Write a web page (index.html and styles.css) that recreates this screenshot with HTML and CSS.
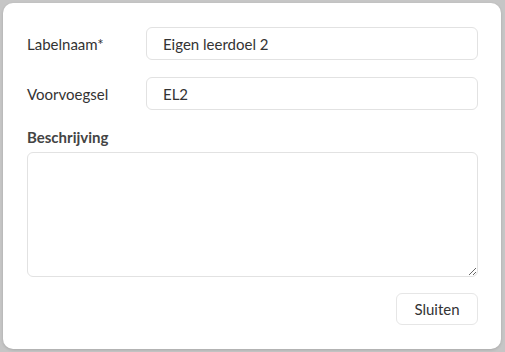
FILE: index.html
```
<!DOCTYPE html>
<html lang="nl">
<head>
    <meta charset="UTF-8">
    <title>Label bewerken</title>
    <link rel="stylesheet" href="styles.css">
</head>
<body>
    <!-- Label dialog -->
    <div class="modal">
        <div class="form-row">
            <label class="form-label" for="labelName">Labelnaam*</label>
            <input class="form-input" id="labelName" type="text" value="Eigen leerdoel 2">
        </div>
        <div class="form-row">
            <label class="form-label" for="prefix">Voorvoegsel</label>
            <input class="form-input" id="prefix" type="text" value="EL2">
        </div>
        <div class="form-block">
            <label class="block-label" for="description">Beschrijving</label>
            <textarea class="form-textarea" id="description"></textarea>
        </div>
        <div class="modal-footer">
            <button class="close-button">Sluiten</button>
        </div>
    </div>
</body>
</html>
```

FILE: styles.css
```
* {
    margin: 0;
    padding: 0;
    box-sizing: border-box;
}
body, html {
    width: 100%;
    height: 100%;
}
body {
    background-color: #c6c6c6;
    font-family: Lato, "Open Sans", sans-serif;
    color: #333;
    padding: 3px 4px 3px 3px;
}
.modal {
    background-color: #fff;
    border-radius: 10px;
    height: 346px;
    padding: 24px 23px 24px 24px;
    display: flex;
    flex-direction: column;
    box-shadow: 0 1px 3px rgba(0, 0, 0, 0.15);
}
.form-row {
    display: flex;
    align-items: center;
    margin-bottom: 17px;
}
.form-label {
    width: 119px;
    font-size: 15px;
    color: #333;
}
.form-input {
    flex: 1;
    height: 33px;
    border: 1px solid #e2e2e2;
    border-radius: 6px;
    padding: 0 16px;
    font-family: inherit;
    font-size: 15px;
    color: #333;
    outline: none;
}
.form-block {
    display: flex;
    flex-direction: column;
}
.block-label {
    font-size: 15px;
    font-weight: bold;
    color: #444;
    margin-top: 1px;
    margin-bottom: 6px;
}
.form-textarea {
    height: 125px;
    border: 1px solid #e2e2e2;
    border-radius: 6px;
    padding: 8px 16px;
    font-family: inherit;
    font-size: 15px;
    outline: none;
}
.modal-footer {
    display: flex;
    justify-content: flex-end;
    margin-top: 16px;
}
.close-button {
    width: 82px;
    height: 32px;
    background-color: #fff;
    border: 1px solid #e6e6e6;
    border-radius: 6px;
    font-family: inherit;
    font-size: 15px;
    color: #333;
    cursor: pointer;
}
```
